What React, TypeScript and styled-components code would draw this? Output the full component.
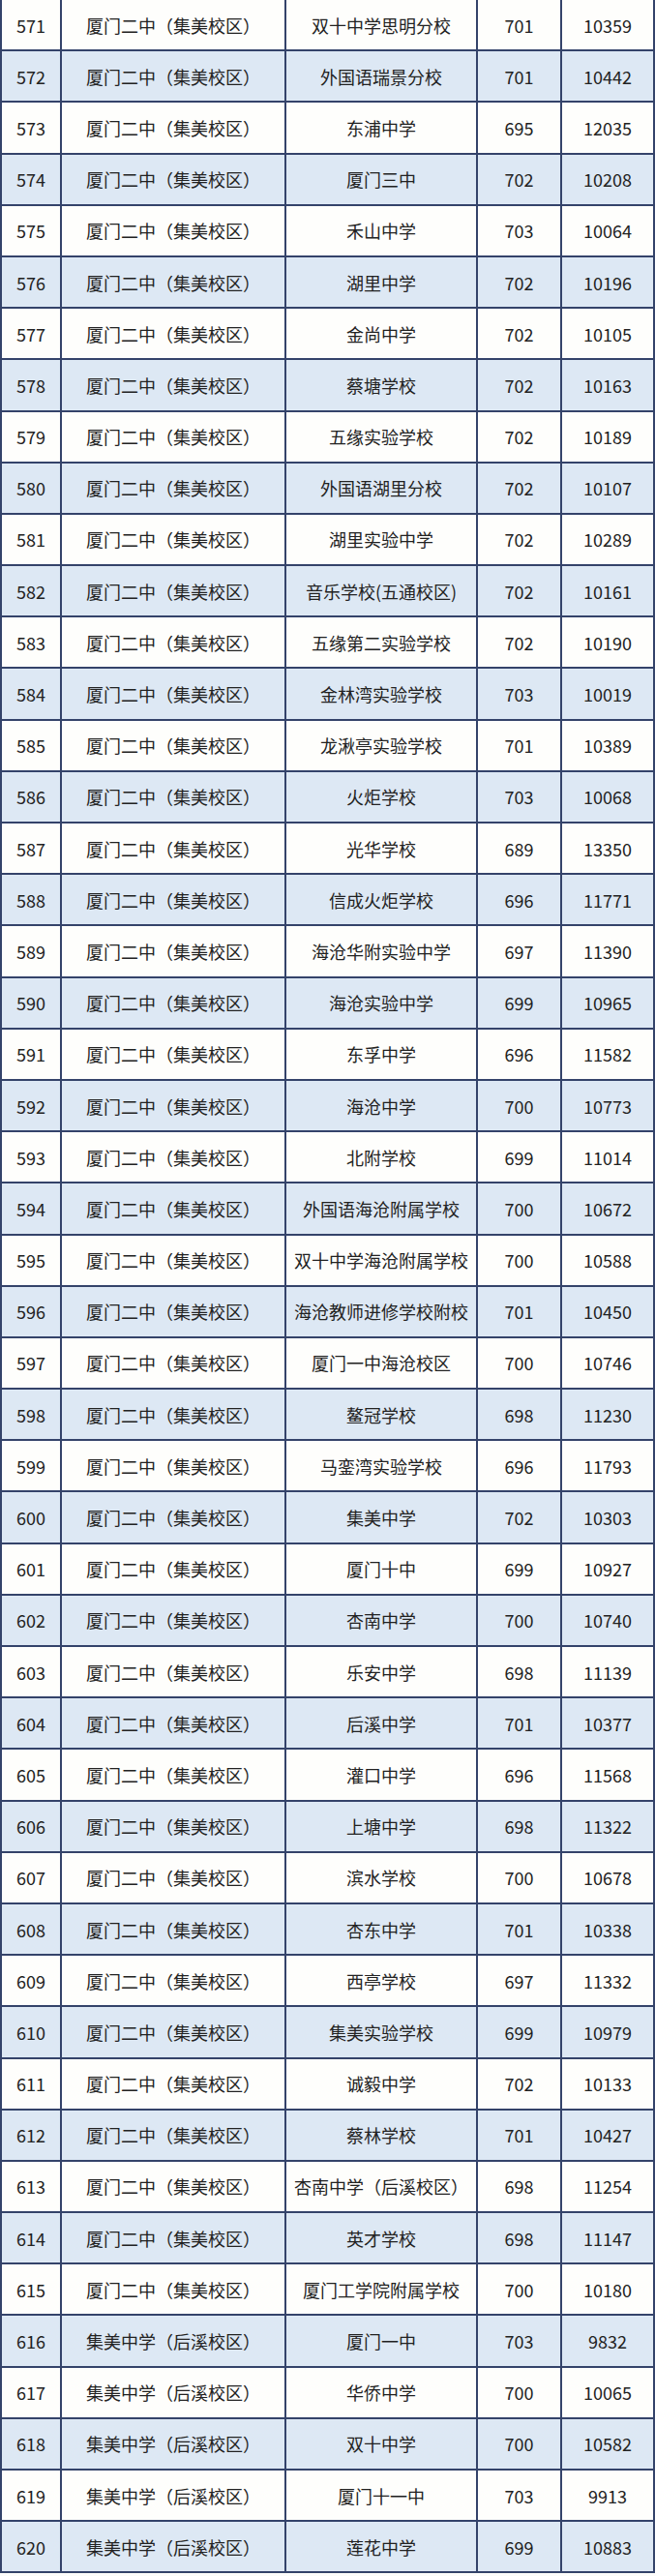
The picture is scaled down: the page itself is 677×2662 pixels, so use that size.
import React from "react";
import styled, { createGlobalStyle } from "styled-components";

const GlobalStyle = createGlobalStyle`
  html, body {
    margin: 0;
    padding: 0;
    background: #fefefc;
  }
  body {
    font-family: "Noto Sans CJK SC", "Noto Sans", sans-serif;
    color: #222;
  }
`;

const Table = styled.div`
  width: 677px;
  display: grid;
  grid-template-columns: 62px 232px 198px 87px 96px;
  grid-auto-rows: 53.2px;
  border-left: 2px solid #34436a;
  box-sizing: border-box;
`;

const Row = styled.div<{ $shaded: boolean }>`
  display: contents;

  & > div {
    background: ${(p) => (p.$shaded ? "#dde8f4" : "#fefefc")};
  }
`;

const Cell = styled.div`
  display: flex;
  align-items: center;
  justify-content: center;
  border-right: 2px solid #34436a;
  border-bottom: 2px solid #34436a;
  font-size: 18px;
  line-height: 1;
  white-space: nowrap;
  box-sizing: border-box;
`;

type Item = [number, string, string, number, number];

const A = "厦门二中（集美校区）";
const B = "集美中学（后溪校区）";

const rows: Item[] = [
  [571, A, "双十中学思明分校", 701, 10359],
  [572, A, "外国语瑞景分校", 701, 10442],
  [573, A, "东浦中学", 695, 12035],
  [574, A, "厦门三中", 702, 10208],
  [575, A, "禾山中学", 703, 10064],
  [576, A, "湖里中学", 702, 10196],
  [577, A, "金尚中学", 702, 10105],
  [578, A, "蔡塘学校", 702, 10163],
  [579, A, "五缘实验学校", 702, 10189],
  [580, A, "外国语湖里分校", 702, 10107],
  [581, A, "湖里实验中学", 702, 10289],
  [582, A, "音乐学校(五通校区)", 702, 10161],
  [583, A, "五缘第二实验学校", 702, 10190],
  [584, A, "金林湾实验学校", 703, 10019],
  [585, A, "龙湫亭实验学校", 701, 10389],
  [586, A, "火炬学校", 703, 10068],
  [587, A, "光华学校", 689, 13350],
  [588, A, "信成火炬学校", 696, 11771],
  [589, A, "海沧华附实验中学", 697, 11390],
  [590, A, "海沧实验中学", 699, 10965],
  [591, A, "东孚中学", 696, 11582],
  [592, A, "海沧中学", 700, 10773],
  [593, A, "北附学校", 699, 11014],
  [594, A, "外国语海沧附属学校", 700, 10672],
  [595, A, "双十中学海沧附属学校", 700, 10588],
  [596, A, "海沧教师进修学校附校", 701, 10450],
  [597, A, "厦门一中海沧校区", 700, 10746],
  [598, A, "鳌冠学校", 698, 11230],
  [599, A, "马銮湾实验学校", 696, 11793],
  [600, A, "集美中学", 702, 10303],
  [601, A, "厦门十中", 699, 10927],
  [602, A, "杏南中学", 700, 10740],
  [603, A, "乐安中学", 698, 11139],
  [604, A, "后溪中学", 701, 10377],
  [605, A, "灌口中学", 696, 11568],
  [606, A, "上塘中学", 698, 11322],
  [607, A, "滨水学校", 700, 10678],
  [608, A, "杏东中学", 701, 10338],
  [609, A, "西亭学校", 697, 11332],
  [610, A, "集美实验学校", 699, 10979],
  [611, A, "诚毅中学", 702, 10133],
  [612, A, "蔡林学校", 701, 10427],
  [613, A, "杏南中学（后溪校区）", 698, 11254],
  [614, A, "英才学校", 698, 11147],
  [615, A, "厦门工学院附属学校", 700, 10180],
  [616, B, "厦门一中", 703, 9832],
  [617, B, "华侨中学", 700, 10065],
  [618, B, "双十中学", 700, 10582],
  [619, B, "厦门十一中", 703, 9913],
  [620, B, "莲花中学", 699, 10883],
];

export default function App() {
  return (
    <>
      <GlobalStyle />
      <Table>
        {rows.map(([no, from, to, score, rank]) => (
          <Row key={no} $shaded={no % 2 === 0}>
            <Cell>{no}</Cell>
            <Cell>{from}</Cell>
            <Cell>{to}</Cell>
            <Cell>{score}</Cell>
            <Cell>{rank}</Cell>
          </Row>
        ))}
      </Table>
    </>
  );
}
